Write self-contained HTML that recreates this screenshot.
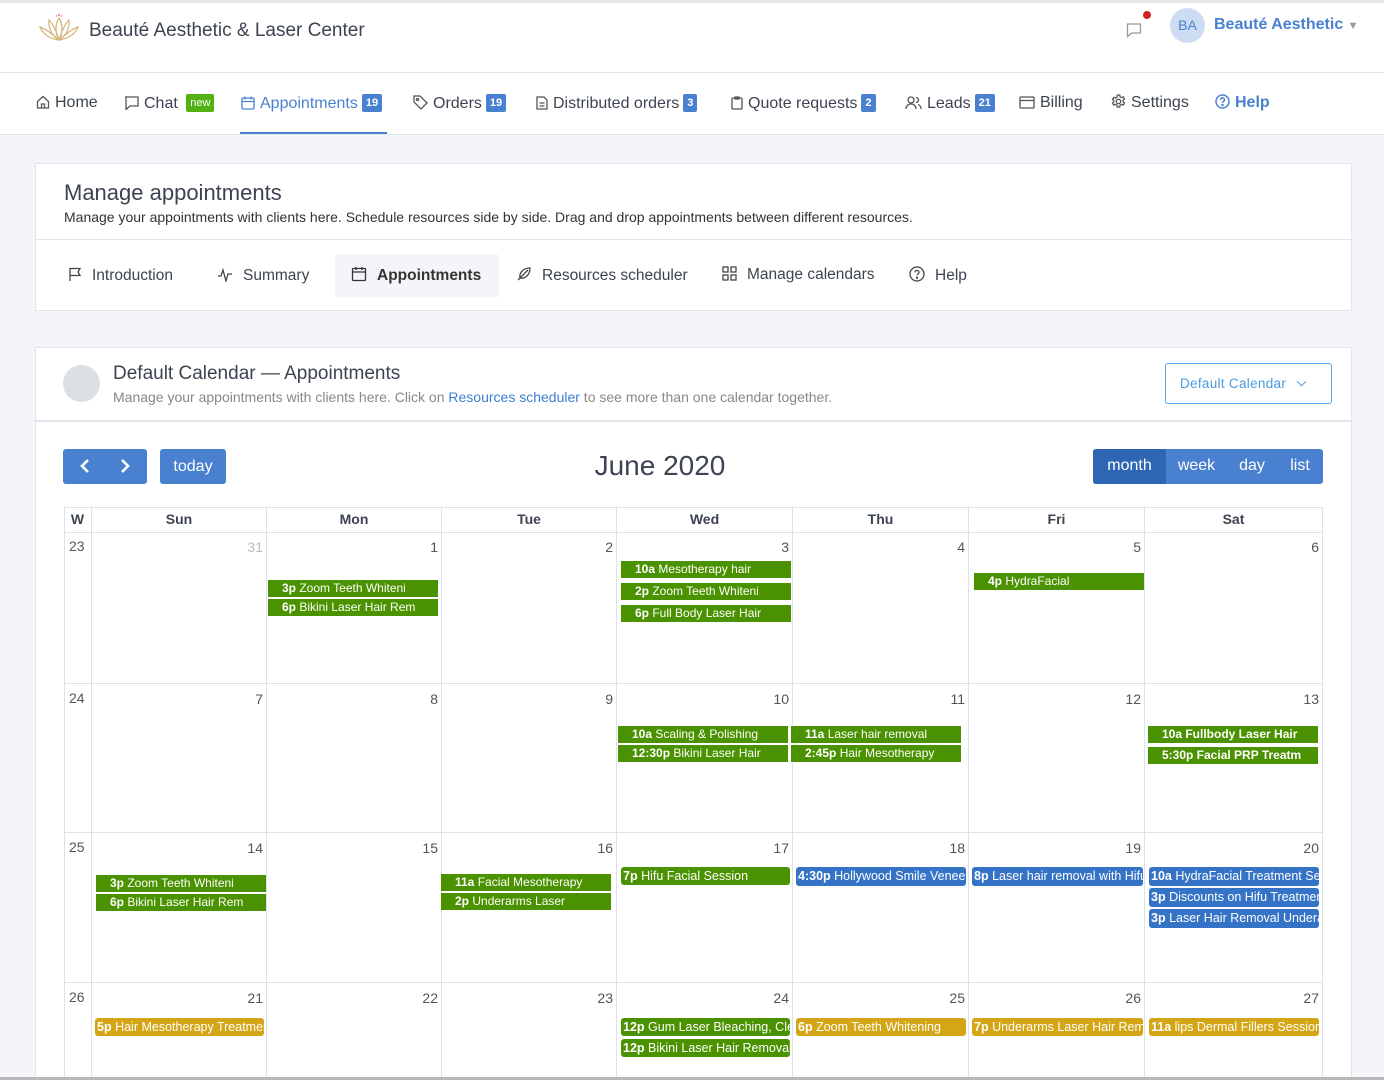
<!DOCTYPE html>
<html style="width:1384px;height:1080px;overflow:hidden"><head><meta charset="utf-8">
<style>
*{box-sizing:border-box;margin:0;padding:0}
body{width:1384px;height:1080px;overflow:hidden;background:#f3f5f9;font-family:"Liberation Sans",sans-serif;color:#3d4451;position:relative}
.a{position:absolute}
.hdr{left:0;top:0;width:1384px;height:135px;background:#fff}
.badge{display:inline-block;background:#4a80d0;color:#fff;font-size:11px;font-weight:bold;padding:2px 4px;border-radius:2px;line-height:14px;vertical-align:2px;margin-left:4px}
.nav{top:94px;font-size:16px;color:#3d4451;white-space:nowrap}
.nav svg{vertical-align:-2px;margin-right:5px}
.card{background:#fff;border:1px solid #e1e5ec}
.tab{top:266px;font-size:15.5px;white-space:nowrap}
.tab svg{vertical-align:-2px;margin-right:10px}
.btn{background:#4a80d0;color:#fff;border-radius:3px}
.cell{position:absolute;border-right:1px solid #dde2ea;border-bottom:1px solid #dde2ea}
.num{position:absolute;font-size:14px;color:#555}
.ev{position:absolute;height:17px;font-size:12px;line-height:17px;color:#fff;white-space:nowrap;overflow:hidden;padding-left:14px}
.g{background:#4a9200}
.b{background:#3573c6;border-radius:3px;padding-left:2px;height:19px;line-height:19px;font-size:12.5px}
.y{background:#d4a514;border-radius:3px;padding-left:2px;height:18px;line-height:18px;font-size:12.5px}
.gr{background:#4a9200;border-radius:3px;padding-left:2px;height:18px;line-height:18px;font-size:12.5px}
.ev b{font-weight:bold}
</style></head><body>
<div class="a hdr"></div>
<div class="a" style="left:0;top:0;width:1384px;height:3px;background:#e6e6e6"></div>
<div class="a" style="left:0;top:72px;width:1384px;height:1px;background:#e1e5ec"></div>
<div class="a" style="left:0;top:134px;width:1384px;height:1px;background:#e1e5ec"></div>
<svg class="a" style="left:38px;top:12px" width="42" height="30" viewBox="0 0 42 30" fill="none" stroke="#d4b47a" stroke-width="1.2"><path d="M21 6 C17 12 17 22 21 28 C25 22 25 12 21 6Z"/><path d="M21 28 C14 24 10 16 11 8 C15 12 18 18 21 28"/><path d="M21 28 C28 24 32 16 31 8 C27 12 24 18 21 28"/><path d="M21 28 C12 27 5 22 2 15 C8 17 14 22 21 28"/><path d="M21 28 C30 27 37 22 40 15 C34 17 28 22 21 28"/><circle cx="21" cy="3" r="1" fill="#e07090" stroke="none"/><circle cx="18.5" cy="4" r=".8" fill="#e07090" stroke="none"/><circle cx="23.5" cy="4" r=".8" fill="#e07090" stroke="none"/></svg>
<div class="a" style="left:89px;top:20px;font-size:19px;color:#3d4451">Beauté Aesthetic &amp; Laser Center</div>
<svg class="a" style="left:1126px;top:22px" width="16" height="16" viewBox="0 0 16 16" fill="none" stroke="#999" stroke-width="1.3"><path d="M1.5 2h13v9h-9l-4 3.5z"/></svg>
<div class="a" style="left:1143px;top:11px;width:8px;height:8px;border-radius:50%;background:#d42020"></div>
<div class="a" style="left:1170px;top:8px;width:35px;height:35px;border-radius:50%;background:#cddcf2;color:#4a80d0;font-size:14px;text-align:center;line-height:35px">BA</div>
<div class="a" style="left:1214px;top:16px;font-size:16px;font-weight:bold;color:#4a80d0">Beauté Aesthetic <span style="color:#999;font-size:11px">▼</span></div>

<div class="a nav" style="left:36px"><svg width="14" height="14" viewBox="0 0 14 14" fill="none" stroke="#555" stroke-width="1.3"><path d="M1.5 6.5L7 1.5l5.5 5V13h-11z M5.5 13V9h3v4"/></svg>Home</div>
<div class="a nav" style="left:124px"><svg width="15" height="14" viewBox="0 0 15 14" fill="none" stroke="#555" stroke-width="1.3"><path d="M1 1h13v9h-8l-4 3.5V1z"/></svg>Chat <span class="badge" style="background:#52b212;font-weight:normal">new</span></div>
<div class="a nav" style="left:241px;color:#4a80d0"><svg width="14" height="14" viewBox="0 0 14 14" fill="none" stroke="#4a80d0" stroke-width="1.3"><rect x="1" y="2" width="12" height="11" rx="1"/><path d="M1 5.5h12M4 0.5v3M10 0.5v3"/></svg>Appointments<span class="badge">19</span></div>
<div class="a" style="left:240px;top:132px;width:147px;height:2px;background:#4a80d0"></div>
<div class="a nav" style="left:413px"><svg width="15" height="15" viewBox="0 0 15 15" fill="none" stroke="#555" stroke-width="1.3"><path d="M1 1h6l7 7-6 6-7-7z"/><circle cx="4.5" cy="4.5" r="1"/></svg>Orders<span class="badge">19</span></div>
<div class="a nav" style="left:536px"><svg width="12" height="14" viewBox="0 0 12 14" fill="none" stroke="#555" stroke-width="1.3"><path d="M1 1h7l3 3v9H1z M3.5 7h5M3.5 10h5"/></svg>Distributed orders<span class="badge">3</span></div>
<div class="a nav" style="left:731px"><svg width="12" height="14" viewBox="0 0 12 14" fill="none" stroke="#555" stroke-width="1.3"><rect x="1" y="2" width="10" height="11" rx="1"/><path d="M4 1h4v2H4z"/></svg>Quote requests<span class="badge">2</span></div>
<div class="a nav" style="left:905px"><svg width="17" height="14" viewBox="0 0 17 14" fill="none" stroke="#555" stroke-width="1.3"><circle cx="6" cy="4" r="3"/><path d="M1 13c0-3 2-5 5-5s5 2 5 5M11 1.5a2.5 2.5 0 010 5M13 8.5c2 .5 3 2.5 3 4.5"/></svg>Leads<span class="badge">21</span></div>
<div class="a nav" style="left:1019px"><svg width="16" height="13" viewBox="0 0 16 13" fill="none" stroke="#555" stroke-width="1.3"><rect x="1" y="1" width="14" height="11" rx="1"/><path d="M1 4.5h14"/></svg>Billing</div>
<div class="a nav" style="left:1111px"><svg width="15" height="15" viewBox="0 0 15 15" fill="none" stroke="#555" stroke-width="1.3"><circle cx="7.5" cy="7.5" r="2.2"/><path d="M6.3 1h2.4l.4 1.8 1.5.8 1.7-.7 1.2 2.1-1.4 1.2v1.6l1.4 1.2-1.2 2.1-1.7-.7-1.5.8-.4 1.8H6.3l-.4-1.8-1.5-.8-1.7.7-1.2-2.1 1.4-1.2V6.7L1.5 5.5l1.2-2.1 1.7.7 1.5-.8z"/></svg>Settings</div>
<div class="a nav" style="left:1215px;color:#4a80d0;font-weight:bold"><svg width="15" height="15" viewBox="0 0 15 15" fill="none" stroke="#4a80d0" stroke-width="1.5"><circle cx="7.5" cy="7.5" r="6.5"/><path d="M5.5 5.8a2 2 0 114 .2c0 1.3-2 1.4-2 2.8"/><circle cx="7.5" cy="11" r=".5" fill="#4a80d0"/></svg>Help</div>

<div class="a card" style="left:35px;top:163px;width:1317px;height:148px"></div>
<div class="a" style="left:64px;top:180px;font-size:22px;color:#3d4451">Manage appointments</div>
<div class="a" style="left:64px;top:209px;font-size:14px;color:#333">Manage your appointments with clients here. Schedule resources side by side. Drag and drop appointments between different resources.</div>
<div class="a" style="left:36px;top:239px;width:1315px;height:1px;background:#e1e5ec"></div>
<div class="a" style="left:335px;top:254px;width:164px;height:43px;background:#f3f5f9;border-radius:3px"></div>
<div class="a tab" style="left:68px;top:267px"><svg width="14" height="15" viewBox="0 0 14 15" fill="none" stroke="#444" stroke-width="1.3"><path d="M2 14V1.5h10l-2 3.5 2 3.5H2"/></svg>Introduction</div>
<div class="a tab" style="left:217px;top:267px"><svg width="16" height="14" viewBox="0 0 16 14" fill="none" stroke="#444" stroke-width="1.3"><path d="M1 8h3l2-6 3 11 2-7h4"/></svg>Summary</div>
<div class="a tab" style="left:351px;font-weight:bold;color:#333"><svg width="16" height="16" viewBox="0 0 16 16" fill="none" stroke="#333" stroke-width="1.3"><rect x="1.5" y="2.5" width="13" height="12" rx="1"/><path d="M1.5 6h13M5 1v3M11 1v3"/></svg>Appointments</div>
<div class="a tab" style="left:516px"><svg width="16" height="16" viewBox="0 0 16 16" fill="none" stroke="#444" stroke-width="1.3"><path d="M2 14L12 4M4 12c-1-5 3-10 10-10-0 7-5 11-10 10z"/></svg>Resources scheduler</div>
<div class="a tab" style="left:722px"><svg width="15" height="15" viewBox="0 0 15 15" fill="none" stroke="#444" stroke-width="1.3"><rect x="1" y="1" width="5" height="5"/><rect x="9" y="1" width="5" height="5"/><rect x="1" y="9" width="5" height="5"/><rect x="9" y="9" width="5" height="5"/></svg>Manage calendars</div>
<div class="a tab" style="left:909px"><svg width="16" height="16" viewBox="0 0 16 16" fill="none" stroke="#444" stroke-width="1.3"><circle cx="8" cy="8" r="7"/><path d="M6 6.3a2 2 0 114 .2c0 1.3-2 1.4-2 2.8"/><circle cx="8" cy="11.8" r=".5" fill="#444"/></svg>Help</div>

<div class="a card" style="left:35px;top:347px;width:1317px;height:740px"></div>
<div class="a" style="left:63px;top:365px;width:37px;height:37px;border-radius:50%;background:#dcdfe4"></div>
<div class="a" style="left:113px;top:363px;font-size:19px;color:#3d4451">Default Calendar — Appointments</div>
<div class="a" style="left:113px;top:389px;font-size:14px;color:#888">Manage your appointments with clients here. Click on <span style="color:#3c7fd1">Resources scheduler</span> to see more than one calendar together.</div>
<div class="a" style="left:1165px;top:363px;width:167px;height:41px;border:1px solid #59a7ee;border-radius:3px;color:#4a9be0;font-size:13.5px;line-height:39px;padding-left:14px;letter-spacing:.3px">Default Calendar <span style="margin-left:8px;display:inline-block;width:7px;height:7px;border-right:1.5px solid #4a9be0;border-bottom:1.5px solid #4a9be0;transform:rotate(45deg);vertical-align:3px"></span></div>
<div class="a" style="left:36px;top:420px;width:1315px;height:2px;background:#e1e5ec"></div>

<div class="a btn" style="left:63px;top:449px;width:84px;height:35px"></div>
<svg class="a" style="left:79px;top:458px" width="12" height="16" viewBox="0 0 12 16" fill="none" stroke="#fff" stroke-width="2.6"><path d="M9 2L3 8l6 6"/></svg>
<svg class="a" style="left:119px;top:458px" width="12" height="16" viewBox="0 0 12 16" fill="none" stroke="#fff" stroke-width="2.6"><path d="M3 2l6 6-6 6"/></svg>
<div class="a btn" style="left:160px;top:449px;width:66px;height:35px;font-size:16px;text-align:center;line-height:35px">today</div>
<div class="a" style="left:560px;top:450px;width:200px;text-align:center;font-size:28px;color:#3d4451">June 2020</div>
<div class="a btn" style="left:1093px;top:449px;width:230px;height:35px"></div>
<div class="a" style="left:1093px;top:449px;width:73px;height:35px;background:#2f66b4;border-radius:3px 0 0 3px"></div>
<div class="a" style="left:1093px;top:457px;width:73px;text-align:center;color:#fff;font-size:16px">month</div>
<div class="a" style="left:1166px;top:457px;width:61px;text-align:center;color:#fff;font-size:16px">week</div>
<div class="a" style="left:1227px;top:457px;width:50px;text-align:center;color:#fff;font-size:16px">day</div>
<div class="a" style="left:1277px;top:457px;width:46px;text-align:center;color:#fff;font-size:16px">list</div>

<div class="a" style="left:64px;top:507px;width:1259px;height:580px;border-left:1px solid #dde2ea;border-top:1px solid #dde2ea"></div>
<div id="g"></div>
<script>
var xs=[64,92,267,442,617,793,969,1145,1323];
var ys=[507,532,684,833,983,1100];
var h='';
var names=['W','Sun','Mon','Tue','Wed','Thu','Fri','Sat'];
for(var c=0;c<8;c++){
 h+='<div class="cell" style="left:'+xs[c]+'px;top:507px;width:'+(xs[c+1]-xs[c])+'px;height:26px;text-align:center;font-weight:bold;font-size:14px;line-height:25px;color:#3d4451">'+names[c]+'</div>';
}
var nums=[[23,31,1,2,3,4,5,6],[24,7,8,9,10,11,12,13],[25,14,15,16,17,18,19,20],[26,21,22,23,24,25,26,27]];
for(var r=0;r<4;r++){for(var c=0;c<8;c++){
 h+='<div class="cell" style="left:'+xs[c]+'px;top:'+ys[r+1]+'px;width:'+(xs[c+1]-xs[c])+'px;height:'+(ys[r+2]-ys[r+1])+'px"></div>';
 var n=nums[r][c];
 if(c==0)h+='<div class="num" style="left:69px;top:'+(ys[r+1]+6)+'px">'+n+'</div>';
 else h+='<div class="num" style="left:'+xs[c]+'px;width:'+(xs[c+1]-xs[c]-4)+'px;text-align:right;top:'+(ys[r+1]+7)+'px;'+(r==0&&c==1?'color:#bbb':'')+'">'+n+'</div>';
}}
document.getElementById('g').innerHTML=h;
</script>

<div class="ev g" style="left:268px;top:580px;width:170px"><b>3p</b> Zoom Teeth Whiteni</div>
<div class="ev g" style="left:268px;top:599px;width:170px"><b>6p</b> Bikini Laser Hair Rem</div>
<div class="ev g" style="left:621px;top:561px;width:170px"><b>10a</b> Mesotherapy hair</div>
<div class="ev g" style="left:621px;top:583px;width:170px"><b>2p</b> Zoom Teeth Whiteni</div>
<div class="ev g" style="left:621px;top:605px;width:170px"><b>6p</b> Full Body  Laser Hair</div>
<div class="ev g" style="left:974px;top:573px;width:170px"><b>4p</b> HydraFacial</div>
<div class="ev g" style="left:618px;top:726px;width:170px"><b>10a</b> Scaling &amp; Polishing</div>
<div class="ev g" style="left:618px;top:745px;width:170px"><b>12:30p</b> Bikini Laser Hair</div>
<div class="ev g" style="left:791px;top:726px;width:170px"><b>11a</b> Laser hair removal</div>
<div class="ev g" style="left:791px;top:745px;width:170px"><b>2:45p</b> Hair Mesotherapy</div>
<div class="ev g" style="left:1148px;top:726px;width:170px"><b>10a Fullbody Laser Hair</b></div>
<div class="ev g" style="left:1148px;top:747px;width:170px"><b>5:30p Facial PRP Treatm</b></div>
<div class="ev g" style="left:96px;top:875px;width:170px"><b>3p</b> Zoom Teeth Whiteni</div>
<div class="ev g" style="left:96px;top:894px;width:170px"><b>6p</b> Bikini Laser Hair Rem</div>
<div class="ev g" style="left:441px;top:874px;width:170px"><b>11a</b> Facial Mesotherapy</div>
<div class="ev g" style="left:441px;top:893px;width:170px"><b>2p</b> Underarms  Laser</div>
<div class="ev gr" style="left:621px;top:867px;width:169px"><b>7p</b> Hifu Facial Session</div>
<div class="ev b" style="left:796px;top:867px;width:170px"><b>4:30p</b> Hollywood Smile Veneers</div>
<div class="ev b" style="left:972px;top:867px;width:171px"><b>8p</b> Laser hair removal with Hifu</div>
<div class="ev b" style="left:1149px;top:867px;width:170px"><b>10a</b> HydraFacial Treatment Session</div>
<div class="ev b" style="left:1149px;top:888px;width:170px"><b>3p</b> Discounts on Hifu Treatment</div>
<div class="ev b" style="left:1149px;top:909px;width:170px"><b>3p</b> Laser Hair Removal Underarms</div>
<div class="ev y" style="left:95px;top:1018px;width:169px"><b>5p</b> Hair Mesotherapy Treatment</div>
<div class="ev gr" style="left:621px;top:1018px;width:169px"><b>12p</b> Gum Laser Bleaching, Cleaning</div>
<div class="ev gr" style="left:621px;top:1039px;width:169px"><b>12p</b> Bikini Laser Hair Removal</div>
<div class="ev y" style="left:796px;top:1018px;width:170px"><b>6p</b> Zoom Teeth Whitening</div>
<div class="ev y" style="left:972px;top:1018px;width:171px"><b>7p</b> Underarms Laser Hair Removal</div>
<div class="ev y" style="left:1149px;top:1018px;width:170px"><b>11a</b> lips Dermal Fillers Session</div>

<div class="a" style="left:0;top:1077px;width:1384px;height:3px;background:#b8b8b8"></div>
</body></html>
